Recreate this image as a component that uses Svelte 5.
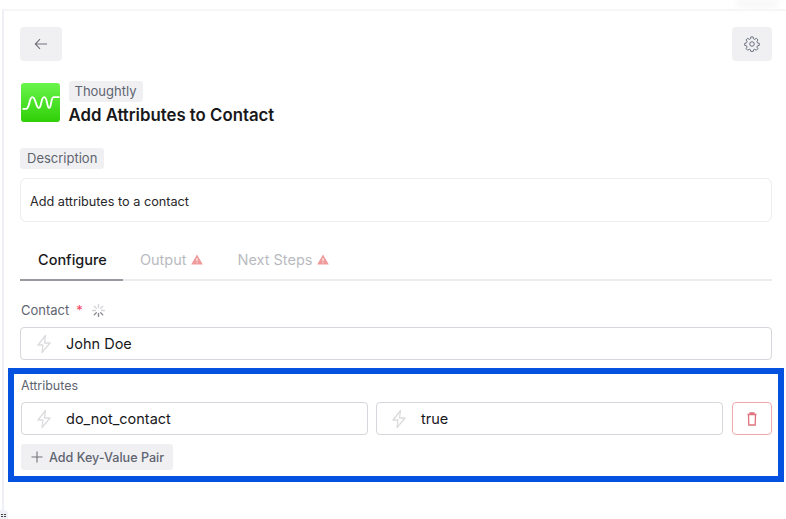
<script>
  const spokes = [0, 45, 90, 135, 180, 225, 270, 315];
</script>

{#snippet bolt()}
  <svg class="bolt" width="16" height="20" viewBox="0 0 16 20" fill="none" stroke="#dcdcdf" stroke-width="1.3" stroke-linejoin="round">
    <path d="M9.500 1.500 2 11h5l-1 7.500L14 9H8.500z" />
  </svg>
{/snippet}

<div class="shell">
  <div class="blur"></div>
  <main class="panel">
    <div class="toolbar">
      <button class="square" aria-label="Back">
        <svg width="16" height="16" viewBox="0 0 16 16" fill="none" stroke="#71717a" stroke-width="1.1"><path d="M14 8H2.500M7 3.200 2.300 8 7 12.800" /></svg>
      </button>
      <button class="square gear" aria-label="Settings">
        <svg width="16" height="16" viewBox="0 0 24 24" fill="none" stroke="#6b7280" stroke-width="1.5" stroke-linejoin="round"><path d="M10.300 2.600h3.400l.6 2.800 1.800.8 2.500-1.500 2.300 2.400-1.500 2.400.7 1.900 2.800.7v3.200l-2.800.7-.7 1.800 1.500 2.500-2.300 2.300-2.500-1.500-1.800.8-.6 2.800h-3.400l-.6-2.800-1.800-.8-2.500 1.500-2.300-2.300 1.500-2.500-.7-1.800-2.800-.7v-3.200l2.800-.7.7-1.900-1.500-2.400 2.300-2.400 2.500 1.500 1.800-.8z" transform="translate(0 -1.200)"/><circle cx="12" cy="12" r="3.400"/></svg>
      </button>
    </div>

    <header class="heading">
      <div class="logo">
        <svg width="40" height="39" viewBox="0 0 40 39" fill="none" stroke="#fff" stroke-width="1.9"><path d="M1.500 26H5C9 26 8 14 11.500 14S15 25 18 25 20 14 23.500 14 26 25 28.500 25 30 14 33 14H39" /></svg>
      </div>
      <div class="heading-text">
        <span class="chip">Thoughtly</span>
        <h1>Add Attributes to Contact</h1>
      </div>
    </header>

    <span class="chip desc-chip">Description</span>
    <div class="desc">Add attributes to a contact</div>

    <nav class="tabs">
      <span class="tab active">Configure</span>
      <span class="tab">Output
        <svg width="12" height="11" viewBox="0 0 12 11"><path d="M6 .5 11.800 10.500H.2z" fill="#ef9a9a"/><path d="M6 4v3.200M6 8.300v.9" stroke="#fff" stroke-width="1"/></svg>
      </span>
      <span class="tab">Next Steps
        <svg width="12" height="11" viewBox="0 0 12 11"><path d="M6 .5 11.800 10.500H.2z" fill="#ef9a9a"/><path d="M6 4v3.200M6 8.300v.9" stroke="#fff" stroke-width="1"/></svg>
      </span>
    </nav>

    <div class="label contact-label">
      Contact <span class="req">*</span>
      <svg class="spin" width="15" height="15" viewBox="0 0 14 14" stroke-width="1.300" stroke-linecap="round">
        {#each spokes as a, i}
          <path d="M7 1.500V4.200" transform="rotate({a} 7 7)" stroke={i > 2 && i < 6 ? '#8a8a92' : '#d4d4d8'} />
        {/each}
      </svg>
    </div>
    <div class="field contact-field">{@render bolt()}<span>John Doe</span></div>

    <div class="label attrs-label">Attributes</div>
    <div class="row">
      <div class="field">{@render bolt()}<span>do_not_contact</span></div>
      <div class="field">{@render bolt()}<span>true</span></div>
      <button class="trash" aria-label="Delete">
        <svg width="16" height="16" viewBox="0 0 16 16" fill="none" stroke="#e0737c" stroke-width="1.300"><path d="M3.500 3.500h9M6 3.500V2h4v1.500M4.500 3.500l.3 10.500h6.400l.3-10.500" /></svg>
      </button>
    </div>
    <button class="add">
      <svg width="14" height="14" viewBox="0 0 14 14" stroke="#71717a" stroke-width="1.100"><path d="M7 1.500v11M1.500 7h11"/></svg>
      Add Key-Value Pair
    </button>
  </main>
  <div class="highlight"></div>
  <div class="grip"><i></i><i></i><i></i><i></i></div>
</div>

<style>
  :global(body) {
    margin: 0;
    background: #fff;
  }
  .shell {
    position: relative;
    width: 786px;
    height: 519px;
    overflow: hidden;
    font-family: Inter, "Liberation Sans", sans-serif;
    color: #18181b;
    padding: 9px 0 0 2px;
    box-sizing: border-box;
  }
  .panel {
    box-sizing: border-box;
    height: 510px;
    border-top: 2px solid #f6f6f8;
    border-left: 2px solid #eef0f6;
    padding: 16px 14px 0 16px;
  }
  .blur {
    position: absolute;
    left: 735px;
    top: 0;
    width: 45px;
    height: 8px;
    border-radius: 0 0 20px 20px;
    background: #f7f7f7;
    filter: blur(3px);
  }
  button {
    font-family: inherit;
    cursor: pointer;
  }
  .toolbar {
    display: flex;
    justify-content: space-between;
  }
  .square {
    width: 42px;
    height: 34px;
    padding: 0;
    border: 0;
    border-radius: 4px;
    background: #f0f0f3;
    display: flex;
    align-items: center;
    justify-content: center;
  }
  .gear {
    width: 40px;
  }
  .heading {
    display: flex;
    gap: 8.500px;
    margin-top: 20px;
  }
  .logo {
    width: 39.500px;
    height: 39px;
    margin: 2px 0 0 .5px;
    border-radius: 3px;
    background: linear-gradient(180deg, #6af54c 0%, #2fcf07 100%);
    display: flex;
    align-items: center;
    justify-content: center;
  }
  .heading-text {
    display: flex;
    flex-direction: column;
    align-items: flex-start;
  }
  .chip {
    display: inline-block;
    background: #f0f0f3;
    color: #5f6470;
    border-radius: 3px;
    font-size: 13px;
    line-height: 21px;
    padding: 0 6px;
  }
  h1 {
    margin: 1px 0 0;
    font-size: 16.800px;
    line-height: 24px;
    font-weight: 600;
    color: #18181b;
  }
  .desc-chip {
    margin-top: 21px;
    display: block;
    width: fit-content;
    padding: 0 7px;
  }
  .desc {
    margin-top: 9px;
    height: 44px;
    box-sizing: border-box;
    border: 1px solid #ededf0;
    border-radius: 6px;
    padding: 2px 9px 0;
    display: flex;
    align-items: center;
    font-size: 12.700px;
    color: #27272a;
  }
  .tabs {
    margin-top: 17px;
    height: 42px;
    box-sizing: border-box;
    border-bottom: 2px solid #ececef;
    display: flex;
  }
  .tab {
    height: 42px;
    box-sizing: border-box;
    display: flex;
    align-items: center;
    gap: 5px;
    font-size: 14.500px;
    color: #b9bbc1;
    padding: 0 17px 2px;
    white-space: nowrap;
  }
  .tab.active {
    color: #18181b;
    font-weight: 500;
    border-bottom: 2px solid #9a9aa2;
    padding: 0 16px 0 18px;
  }
  .label {
    font-size: 12.500px;
    line-height: 16px;
    color: #5f6470;
    padding-left: 1px;
  }
  .contact-label {
    margin-top: 21px;
    display: flex;
    align-items: center;
    gap: 7px;
    font-size: 13px;
  }
  .req {
    color: #f43f5e;
    margin-right: 1px;
  }
  .field {
    flex: 1;
    height: 33px;
    box-sizing: border-box;
    border: 1px solid #d6d6dc;
    border-bottom-width: 1.500px;
    border-radius: 4px;
    display: flex;
    align-items: center;
    font-size: 14.500px;
    color: #18181b;
    padding-left: 15px;
    gap: 14px;
  }
  .contact-field {
    margin-top: 9px;
  }
  .attrs-label {
    margin-top: 18px;
  }
  .row {
    display: flex;
    gap: 8px;
    margin-top: 8px;
    margin-left: 1px;
  }
  .row .field {
    padding-left: 14px;
  }
  .bolt {
    flex: none;
  }
  .trash {
    width: 40px;
    height: 33px;
    flex: none;
    padding: 0;
    margin-left: 1px;
    background: #fff;
    border: 1px solid #f0a8ac;
    border-radius: 4px;
    display: flex;
    align-items: center;
    justify-content: center;
  }
  .add {
    margin: 9px 0 0 1px;
    height: 26px;
    width: 152px;
    box-sizing: border-box;
    padding: 0 0 0 9px;
    border: 0;
    border-radius: 3px;
    background: #f0f0f3;
    color: #5f6470;
    font-size: 12.600px;
    font-weight: 500;
    display: flex;
    align-items: center;
    gap: 5px;
    white-space: nowrap;
  }
  .highlight {
    position: absolute;
    left: 8px;
    top: 368px;
    width: 776px;
    height: 114px;
    box-sizing: border-box;
    border: 6px solid #0652e0;
    pointer-events: none;
  }
  .grip {
    position: absolute;
    left: 0;
    bottom: 0;
    width: 8px;
    height: 9px;
    background: #eef0f6;
    border-radius: 0 4px 0 0;
    display: grid;
    grid-template-columns: 2px 2px;
    grid-auto-rows: 1px;
    gap: 1px;
    padding: 4px 0 0 1px;
    box-sizing: border-box;
  }
  .grip i {
    width: 2px;
    height: 1px;
    background: #444;
  }
</style>
